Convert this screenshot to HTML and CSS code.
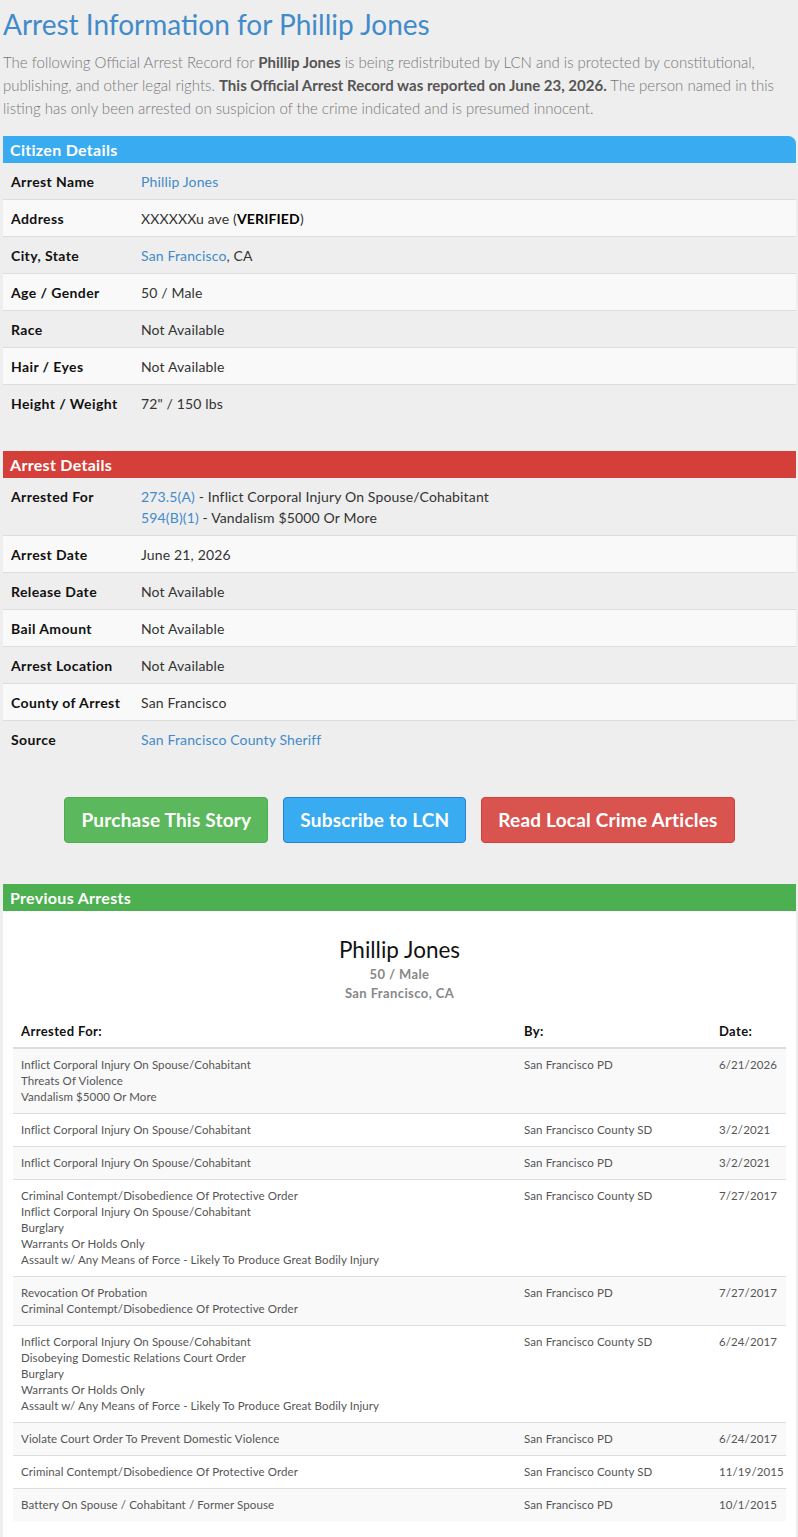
FILE: index.html
```html
<!DOCTYPE html>
<html lang="en">

<head>
    <meta charset="UTF-8" />
    <meta name="viewport" content="width=device-width, initial-scale=1.0" />
    <title>Arrest Information for Phillip Jones</title>
    <link rel="stylesheet" href="styles.css">
</head>

<body>
    <h1 class="page-title">Arrest Information for Phillip Jones</h1>
    <p class="intro">
        The following Official Arrest Record for <b>Phillip Jones</b> is being redistributed by LCN and is protected by constitutional,
        publishing, and other legal rights. <b>This Official Arrest Record was reported on June 23, 2026.</b> The person named in this
        listing has only been arrested on suspicion of the crime indicated and is presumed innocent.
    </p>

    <!-- Citizen -->
    <div class="panel">
        <div class="panel-heading blue rounded">Citizen Details</div>
        <table class="details">
            <tr><th>Arrest Name</th><td><a href="#">Phillip Jones</a></td></tr>
            <tr><th>Address</th><td>XXXXXXu ave (<b>VERIFIED</b>)</td></tr>
            <tr><th>City, State</th><td><a href="#">San Francisco</a>, CA</td></tr>
            <tr><th>Age / Gender</th><td>50 / Male</td></tr>
            <tr><th>Race</th><td>Not Available</td></tr>
            <tr><th>Hair / Eyes</th><td>Not Available</td></tr>
            <tr><th>Height / Weight</th><td>72" / 150 lbs</td></tr>
        </table>
    </div>

    <!-- Arrest -->
    <div class="panel">
        <div class="panel-heading red">Arrest Details</div>
        <table class="details">
            <tr>
                <th>Arrested For</th>
                <td><a href="#">273.5(A)</a> - Inflict Corporal Injury On Spouse/Cohabitant<br>
                    <a href="#">594(B)(1)</a> - Vandalism $5000 Or More</td>
            </tr>
            <tr><th>Arrest Date</th><td>June 21, 2026</td></tr>
            <tr><th>Release Date</th><td>Not Available</td></tr>
            <tr><th>Bail Amount</th><td>Not Available</td></tr>
            <tr><th>Arrest Location</th><td>Not Available</td></tr>
            <tr><th>County of Arrest</th><td>San Francisco</td></tr>
            <tr><th>Source</th><td><a href="#">San Francisco County Sheriff</a></td></tr>
        </table>
    </div>

    <div class="actions">
        <a class="btn btn-green" href="#">Purchase This Story</a>
        <a class="btn btn-blue" href="#">Subscribe to LCN</a>
        <a class="btn btn-red" href="#">Read Local Crime Articles</a>
    </div>

    <!-- History -->
    <div class="panel">
        <div class="panel-heading green">Previous Arrests</div>
        <div class="history">
            <div class="person">
                <div class="person-name">Phillip Jones</div>
                <div class="person-meta">50 / Male</div>
                <div class="person-meta">San Francisco, CA</div>
            </div>
            <table class="arrests">
                <thead>
                    <tr><th>Arrested For:</th><th class="col-by">By:</th><th class="col-date">Date:</th></tr>
                </thead>
                <tbody>
                    <tr>
                        <td>Inflict Corporal Injury On Spouse/Cohabitant<br>Threats Of Violence<br>Vandalism $5000 Or More</td>
                        <td>San Francisco PD</td><td>6/21/2026</td>
                    </tr>
                    <tr>
                        <td>Inflict Corporal Injury On Spouse/Cohabitant</td>
                        <td>San Francisco County SD</td><td>3/2/2021</td>
                    </tr>
                    <tr>
                        <td>Inflict Corporal Injury On Spouse/Cohabitant</td>
                        <td>San Francisco PD</td><td>3/2/2021</td>
                    </tr>
                    <tr>
                        <td>Criminal Contempt/Disobedience Of Protective Order<br>Inflict Corporal Injury On Spouse/Cohabitant<br>Burglary<br>Warrants Or Holds Only<br>Assault w/ Any Means of Force - Likely To Produce Great Bodily Injury</td>
                        <td>San Francisco County SD</td><td>7/27/2017</td>
                    </tr>
                    <tr>
                        <td>Revocation Of Probation<br>Criminal Contempt/Disobedience Of Protective Order</td>
                        <td>San Francisco PD</td><td>7/27/2017</td>
                    </tr>
                    <tr>
                        <td>Inflict Corporal Injury On Spouse/Cohabitant<br>Disobeying Domestic Relations Court Order<br>Burglary<br>Warrants Or Holds Only<br>Assault w/ Any Means of Force - Likely To Produce Great Bodily Injury</td>
                        <td>San Francisco County SD</td><td>6/24/2017</td>
                    </tr>
                    <tr>
                        <td>Violate Court Order To Prevent Domestic Violence</td>
                        <td>San Francisco PD</td><td>6/24/2017</td>
                    </tr>
                    <tr>
                        <td>Criminal Contempt/Disobedience Of Protective Order</td>
                        <td>San Francisco County SD</td><td>11/19/2015</td>
                    </tr>
                    <tr>
                        <td>Battery On Spouse / Cohabitant / Former Spouse</td>
                        <td>San Francisco PD</td><td>10/1/2015</td>
                    </tr>
                </tbody>
            </table>
        </div>
    </div>
</body>

</html>
```

FILE: styles.css
```css
body {
    font-family: Lato, "Open Sans", sans-serif;
    margin: 0;
    padding: 0 2px 0 3px;
    background-color: #eeeeee;
    color: #333;
}

a {
    color: #428bca;
    text-decoration: none;
}

.page-title {
    font-size: 28px;
    font-weight: 400;
    color: #428bca;
    margin: 6px 0 9px 0;
    line-height: 36px;
}

.intro {
    font-size: 15px;
    font-weight: 300;
    line-height: 23px;
    color: #777;
    margin: 0 0 16px 0;
}

.intro b {
    font-weight: 700;
    color: #555;
}

.panel {
    margin-bottom: 30px;
}

.panel-heading {
    color: white;
    font-weight: 700;
    font-size: 16px;
    letter-spacing: 0.3px;
    padding: 4px 7px;
    line-height: 19px;
}

.panel-heading.rounded {
    border-top-right-radius: 8px;
}

.blue {
    background-color: #38abf1;
}

.red {
    background-color: #d43f3a;
}

.green {
    background-color: #4caf50;
}

.details {
    width: 100%;
    border-collapse: collapse;
}

.details tr:nth-child(odd) {
    background-color: #eeeeee;
}

.details tr:nth-child(even) {
    background-color: #f9f9f9;
}

.details tr + tr {
    border-top: 1px solid #dddddd;
}

.details th,
.details td {
    text-align: left;
    vertical-align: top;
    padding: 8px 8px 7px 8px;
    font-size: 14px;
    line-height: 21px;
}

.details th {
    width: 114px;
    font-weight: 700;
    color: #111;
    letter-spacing: 0.4px;
}

.details td {
    color: #333;
    letter-spacing: 0.15px;
}

.details td b {
    color: #000;
}

.actions {
    display: flex;
    justify-content: center;
    gap: 15px;
    margin: 40px 0 41px 0;
}

.btn {
    display: inline-block;
    color: white;
    font-weight: 700;
    font-size: 19px;
    letter-spacing: 0.2px;
    line-height: 24px;
    padding: 10px 16px;
    border-radius: 4px;
    border: 1px solid transparent;
}

.btn-green {
    background-color: #5cb85c;
    border-color: #4cae4c;
}

.btn-blue {
    background-color: #38abf1;
    border-color: #2a7fd8;
}

.btn-red {
    background-color: #d9534f;
    border-color: #d43f3a;
}

.history {
    background: white;
    padding: 10px 10px 40px 10px;
}

.person {
    text-align: center;
    margin: 14px 0 12px 0;
}

.person-name {
    font-size: 22.5px;
    color: #111;
    line-height: 30px;
}

.person-meta {
    font-size: 13px;
    font-weight: 700;
    letter-spacing: 0.4px;
    color: #888;
    line-height: 19px;
}

.arrests {
    width: 100%;
    border-collapse: collapse;
    table-layout: fixed;
}

.arrests th {
    text-align: left;
    font-size: 13px;
    font-weight: 700;
    letter-spacing: 0.4px;
    color: #111;
    padding: 8px 8px;
    border-bottom: 2px solid #dddddd;
}

.arrests td {
    vertical-align: top;
    font-size: 11.5px;
    letter-spacing: 0.1px;
    line-height: 16px;
    color: #555;
    padding: 8px 8px;
    border-top: 1px solid #dddddd;
}

.arrests tbody tr:nth-child(odd) {
    background-color: #f9f9f9;
}

.arrests .col-by {
    width: 179px;
}

.arrests .col-date {
    width: 59px;
}
```
